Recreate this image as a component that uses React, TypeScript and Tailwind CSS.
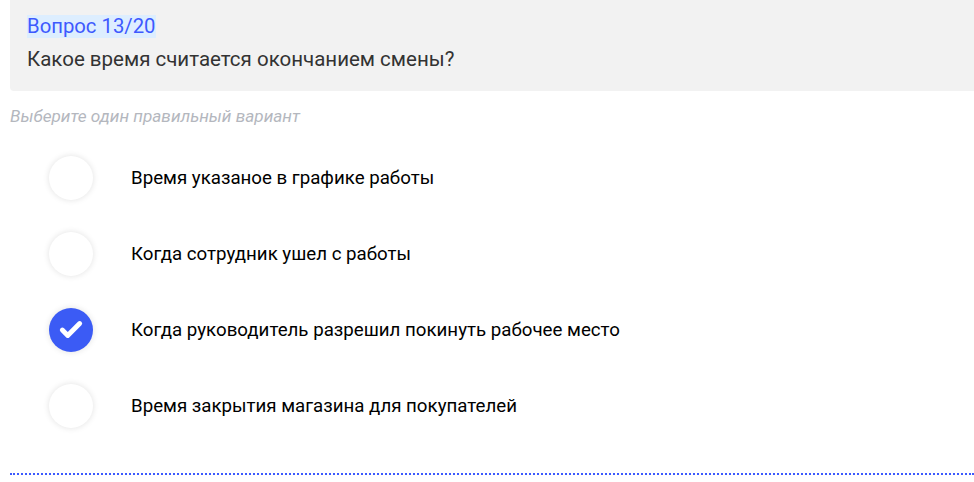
import React, { useState } from 'react'
import { Check } from 'lucide-react'

const options = [
  'Время указаное в графике работы',
  'Когда сотрудник ушел с работы',
  'Когда руководитель разрешил покинуть рабочее место',
  'Время закрытия магазина для покупателей',
]

const App: React.FC = () => {
  const [selected, setSelected] = useState(2)

  return (
    <div className="min-h-[482px] bg-white pl-[10px] font-['Roboto',sans-serif]">
      <div className="rounded-bl-[4px] bg-[#f2f2f2] pl-[17px] pt-[15px] pb-[20px]">
        <span className="inline-block bg-[#ddeeff] pr-[1px] text-[20.3px] leading-[23px] text-[#3d5afe]">
          Вопрос 13/20
        </span>
        <p className="mt-[8px] text-[20.5px] leading-[23px] text-[#333]">
          Какое время считается окончанием смены?
        </p>
      </div>

      <p className="mt-[15px] text-[17.2px] italic leading-[20px] text-[#b4b7be]">
        Выберите один правильный вариант
      </p>

      <div className="mt-[14px] pb-[29px] border-b-2 border-dotted border-[#3d5afe]">
        {options.map((text, i) => (
          <button
            key={i}
            onClick={() => setSelected(i)}
            className="flex h-[76px] w-full items-center gap-[38px] pl-[39px] text-left"
          >
            <span
              className={
                i === selected
                  ? 'flex h-[44px] w-[44px] shrink-0 items-center justify-center rounded-full bg-[#3b5bf5] shadow-[0_0_6px_rgba(0,0,0,0.12)]'
                  : 'flex h-[44px] w-[44px] shrink-0 items-center justify-center rounded-full bg-white shadow-[0_0_6px_rgba(0,0,0,0.12)]'
              }
            >
              {i === selected && <Check className="h-[26px] w-[26px] text-white" strokeWidth={4.5} />}
            </span>
            <span className="text-[18.7px] leading-[22px] text-black">{text}</span>
          </button>
        ))}
      </div>
    </div>
  )
}

export default App
